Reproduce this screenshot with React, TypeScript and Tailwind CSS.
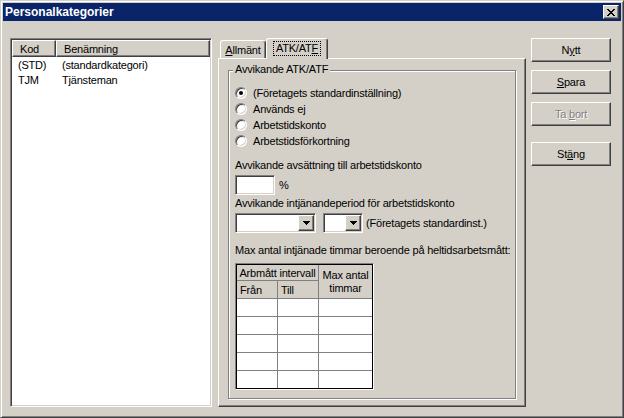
import React from 'react';

const raised =
  'border border-t-white border-l-white border-r-[#404040] border-b-[#404040] shadow-[inset_-1px_-1px_0_#808080]';
const sunken =
  'border border-t-[#808080] border-l-[#808080] border-r-white border-b-white shadow-[inset_1px_1px_0_#404040,inset_-1px_-1px_0_#d4d0c8]';

const closeGlyph = [
  'xx....xx',
  '.xx..xx.',
  '..xxxx..',
  '...xx...',
  '..xxxx..',
  '.xx..xx.',
  'xx....xx',
];

const CloseX = () => (
  <svg width="8" height="7" viewBox="0 0 8 7" shapeRendering="crispEdges">
    {closeGlyph.map((row, y) =>
      row.split('').map((c, x) => (c === 'x' ? <rect key={`${x}-${y}`} x={x} y={y} width="1" height="1" fill="#000" /> : null))
    )}
  </svg>
);

const Arrow = () => (
  <svg width="7" height="4" viewBox="0 0 7 4" shapeRendering="crispEdges">
    <rect x="0" y="0" width="7" height="1" fill="#000" />
    <rect x="1" y="1" width="5" height="1" fill="#000" />
    <rect x="2" y="2" width="3" height="1" fill="#000" />
    <rect x="3" y="3" width="1" height="1" fill="#000" />
  </svg>
);

const Radio = ({ label, checked }: { label: string; checked?: boolean }) => (
  <div className="h-[16px] flex items-center">
    <span className={`w-[12px] h-[12px] rounded-full bg-white flex items-center justify-center ${sunken}`}>
      {checked && <span className="w-[4px] h-[4px] rounded-full bg-black" />}
    </span>
    <span className="ml-[6px]">{label}</span>
  </div>
);

const Combo = ({ w }: { w: string }) => (
  <div className={`${w} h-[20px] bg-white flex justify-end p-px ${sunken}`}>
    <div className={`w-[16px] h-full bg-[#d4d0c8] flex items-center justify-center ${raised}`}>
      <Arrow />
    </div>
  </div>
);

const Button = ({ children, disabled }: { children: React.ReactNode; disabled?: boolean }) => (
  <div
    className={`h-[24px] w-[80px] bg-[#d4d0c8] flex items-center justify-center ${raised} ${
      disabled ? 'text-[#808080] [text-shadow:1px_1px_0_#fff]' : ''
    }`}
  >
    <span className="whitespace-pre">{children}</span>
  </div>
);

const rows = [
  { kod: '(STD)', namn: '(standardkategori)' },
  { kod: 'TJM', namn: 'Tjänsteman' },
];

export default function App() {
  return (
    <div
      className="w-[624px] h-[418px] bg-[#d4d0c8] border border-t-[#d4d0c8] border-l-[#d4d0c8] border-r-[#404040] border-b-[#404040] shadow-[inset_1px_1px_0_#fff,inset_-1px_-1px_0_#808080] p-[2px] flex flex-col text-[11px] tracking-[-0.2px] leading-[14px] text-black font-['Liberation_Sans',Arial,sans-serif]"
    >
      {/* title bar */}
      <div className="h-[18px] bg-[#0a246a] flex items-center justify-between pl-[2px] pr-[2px]">
        <span className="text-white font-bold text-[12px] tracking-normal">Personalkategorier</span>
        <div className={`w-[16px] h-[14px] bg-[#d4d0c8] flex items-center justify-center ${raised}`}>
          <CloseX />
        </div>
      </div>

      <div className="flex pl-[7px] pt-[17px]">
        {/* list */}
        <div className={`w-[202px] h-[369px] bg-white p-px flex flex-col ${sunken}`}>
          <div className="flex h-[17px] bg-[#d4d0c8]">
            <div className={`w-[44px] h-full pl-[7px] flex items-center ${raised}`}>Kod</div>
            <div className={`flex-1 h-full pl-[7px] flex items-center ${raised}`}>Benämning</div>
          </div>
          {rows.map((r) => (
            <div key={r.kod} className="flex h-[15px] items-center">
              <span className="w-[44px] pl-[6px]">{r.kod}</span>
              <span className="pl-[6px]">{r.namn}</span>
            </div>
          ))}
        </div>

        {/* tab control */}
        <div className="ml-[6px] w-[308px] h-[369px] flex flex-col">
          <div className="h-[20px] flex items-end pl-[2px]">
            <div className="h-[18px] w-[46px] border-t border-l border-r border-t-white border-l-white border-r-[#404040] shadow-[inset_-1px_0_0_#808080] rounded-t-[3px] flex items-center justify-center">
              <span>
                <u>A</u>llmänt
              </span>
            </div>
            <div className="relative z-10 -mb-px h-[21px] w-[62px] bg-[#d4d0c8] border-t border-l border-r border-t-white border-l-white border-r-[#404040] shadow-[inset_-1px_0_0_#808080] rounded-t-[3px] flex items-center justify-center pb-[2px]">
              <span className="border border-dotted border-black px-[2px] leading-[13px]">
                ATK/AT<u>F</u>
              </span>
            </div>
          </div>
          <div className="flex-1 border border-t-white border-l-white border-r-[#404040] border-b-[#404040] shadow-[inset_-1px_-1px_0_#808080] pl-[9px] pt-[11px]">
            {/* group box */}
            <div className="relative w-[288px] h-[329px] border border-[#808080] shadow-[inset_1px_1px_0_#fff,1px_1px_0_#fff] pl-[6px] pt-[14px] flex flex-col">
              <span className="absolute left-[4px] -top-[9px] bg-[#d4d0c8] px-[2px]">Avvikande ATK/ATF</span>
              <Radio label="(Företagets standardinställning)" checked />
              <Radio label="Används ej" />
              <Radio label="Arbetstidskonto" />
              <Radio label="Arbetstidsförkortning" />

              <div className="mt-[9px] h-[14px]">Avvikande avsättning till arbetstidskonto</div>
              <div className="mt-[3px] h-[20px] flex items-center">
                <div className={`w-[40px] h-[20px] bg-white ${sunken}`} />
                <span className="ml-[4px]">%</span>
              </div>

              <div className="mt-[1px] h-[14px]">Avvikande intjänandeperiod för arbetstidskonto</div>
              <div className="mt-[3px] h-[20px] flex items-center">
                <Combo w="w-[81px]" />
                <div className="ml-[7px]">
                  <Combo w="w-[40px]" />
                </div>
                <span className="ml-[3px]">(Företagets standardinst.)</span>
              </div>

              <div className="mt-[10px] h-[14px]">Max antal intjänade timmar beroende på heltidsarbetsmått:</div>

              <div className="mt-[6px] w-[139px] border border-t-[#808080] border-l-[#808080] border-r-white border-b-white">
                <div className="border border-black grid grid-cols-[40px_40px_53px] grid-rows-[15px_17px_17px_17px_17px_17px_17px] gap-px bg-[#808080]">
                  <div className="col-span-2 bg-[#d4d0c8] flex items-center justify-center">Arbmått intervall</div>
                  <div className="row-span-2 bg-[#d4d0c8] flex flex-col items-center justify-center leading-[13px]">
                    <span>Max antal</span>
                    <span>timmar</span>
                  </div>
                  <div className="bg-[#d4d0c8] pl-[3px] flex items-center">Från</div>
                  <div className="bg-[#d4d0c8] pl-[3px] flex items-center">Till</div>
                  {Array.from({ length: 15 }).map((_, i) => (
                    <div key={i} className="bg-white" />
                  ))}
                </div>
              </div>
            </div>
          </div>
        </div>

        {/* buttons */}
        <div className="ml-[5px] flex flex-col">
          <Button>
            N<u>y</u>tt
          </Button>
          <div className="mt-[8px]">
            <Button>
              <u>S</u>para
            </Button>
          </div>
          <div className="mt-[8px]">
            <Button disabled>
              {'Ta '}
              <u>b</u>ort
            </Button>
          </div>
          <div className="mt-[16px]">
            <Button>
              St<u>ä</u>ng
            </Button>
          </div>
        </div>
      </div>
    </div>
  );
}
